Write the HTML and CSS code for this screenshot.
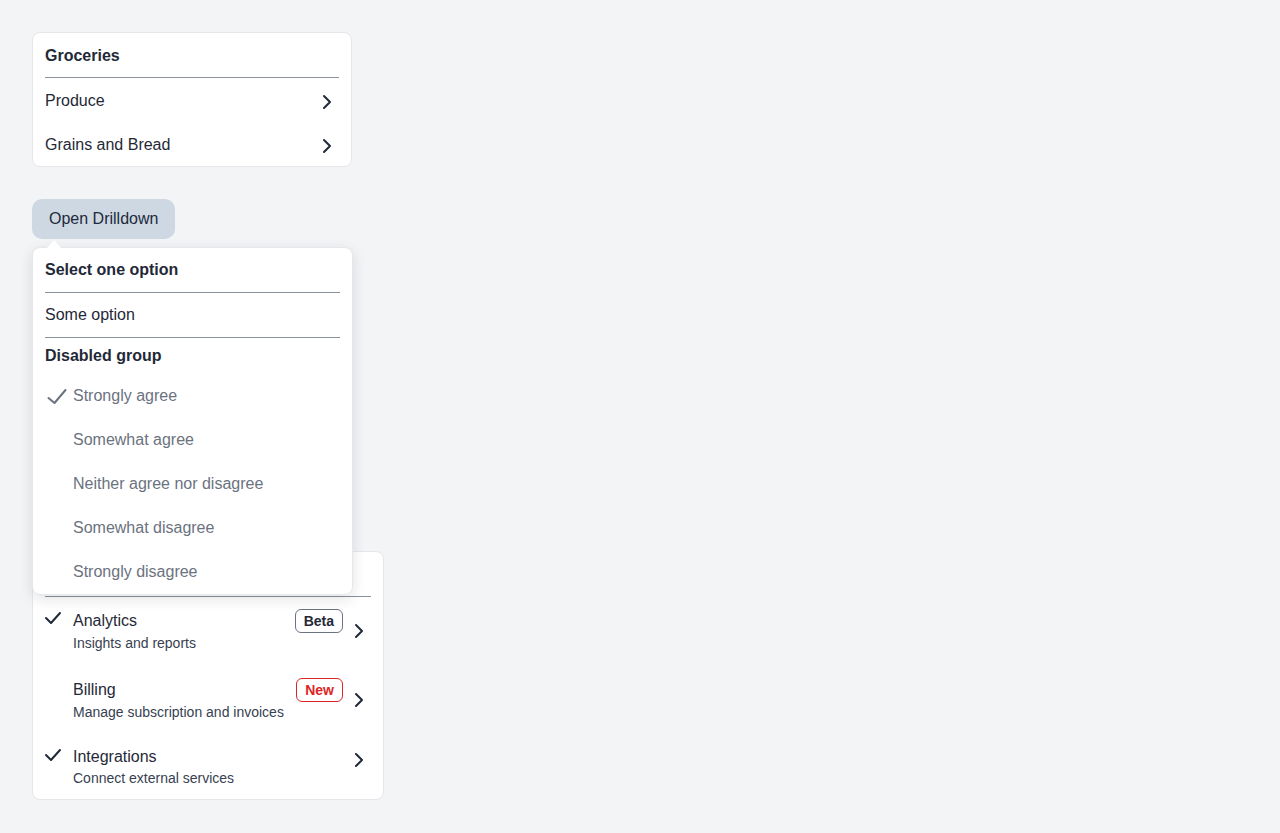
FILE: index.html
```html
<!DOCTYPE html>
<html lang="en">
<head>
<meta charset="utf-8">
<title>Drilldown menus</title>
<link rel="stylesheet" href="styles.css">
</head>
<body>
<main class="stack">

  <!-- Static drilldown list -->
  <section class="card card-narrow">
    <div class="card-head">Groceries</div>
    <div class="divider"></div>
    <div class="row">
      <span>Produce</span>
      <svg class="chev" width="24" height="24" viewBox="0 0 24 24"><polyline points="9 6 15 12 9 18"/></svg>
    </div>
    <div class="row">
      <span>Grains and Bread</span>
      <svg class="chev" width="24" height="24" viewBox="0 0 24 24"><polyline points="9 6 15 12 9 18"/></svg>
    </div>
  </section>

  <!-- Trigger with its open popover -->
  <section class="drill">
    <button class="trigger" type="button">Open Drilldown</button>
    <div class="popover">
      <div class="card-head">Select one option</div>
      <div class="divider"></div>
      <div class="row">Some option</div>
      <div class="divider"></div>
      <div class="group-label">Disabled group</div>
      <div class="row opt disabled">
        <svg class="tick-lg" width="20" height="20" viewBox="0 0 20 20"><polyline points="1.5 12 7.5 17 18.5 4"/></svg>
        <span>Strongly agree</span>
      </div>
      <div class="row opt disabled"><span class="slot"></span><span>Somewhat agree</span></div>
      <div class="row opt disabled"><span class="slot"></span><span>Neither agree nor disagree</span></div>
      <div class="row opt disabled"><span class="slot"></span><span>Somewhat disagree</span></div>
      <div class="row opt disabled"><span class="slot"></span><span>Strongly disagree</span></div>
    </div>
  </section>

  <!-- Rich list with descriptions and badges; its header sits under the popover -->
  <section class="card card-wide">
    <div class="card-head"></div>
    <div class="divider"></div>

    <div class="rich rich-first">
      <span class="lead"><svg width="16" height="16" viewBox="0 0 16 16"><polyline points="1 7 6 12 15 2"/></svg></span>
      <div class="rich-body">
        <div class="rich-top"><span class="title">Analytics</span><span class="badge">Beta</span></div>
        <div class="desc">Insights and reports</div>
      </div>
      <svg class="chev" width="24" height="24" viewBox="0 0 24 24"><polyline points="9 6 15 12 9 18"/></svg>
    </div>

    <div class="rich">
      <span class="lead"></span>
      <div class="rich-body">
        <div class="rich-top"><span class="title">Billing</span><span class="badge badge-new">New</span></div>
        <div class="desc">Manage subscription and invoices</div>
      </div>
      <svg class="chev" width="24" height="24" viewBox="0 0 24 24"><polyline points="9 6 15 12 9 18"/></svg>
    </div>

    <div class="rich rich-plain">
      <span class="lead"><svg width="16" height="16" viewBox="0 0 16 16"><polyline points="1 7 6 12 15 2"/></svg></span>
      <div class="rich-body">
        <div class="rich-top"><span class="title">Integrations</span></div>
        <div class="desc">Connect external services</div>
      </div>
      <svg class="chev" width="24" height="24" viewBox="0 0 24 24"><polyline points="9 6 15 12 9 18"/></svg>
    </div>
  </section>

</main>
</body>
</html>
```

FILE: styles.css
```css
* {
  box-sizing: border-box;
}

html,
body {
  margin: 0;
  background: #f3f4f6;
}

body {
  padding: 32px;
  font-family: "Liberation Sans", Arial, sans-serif;
  font-size: 16px;
  color: #1f2937;
}

.stack {
  display: flex;
  flex-direction: column;
  align-items: flex-start;
  gap: 32px;
}

/* Cards */
.card {
  background: #ffffff;
  border: 1px solid #e5e7eb;
  border-radius: 8px;
  padding: 0 12px;
}

.card-narrow {
  width: 320px;
}

.card-narrow .card-head,
.card-narrow .row {
  padding-top: 2px;
}

.card-narrow .chev {
  margin-top: 2px;
}

.card-wide {
  width: 352px;
}

.card-head {
  height: 44px;
  display: flex;
  align-items: center;
  font-weight: 700;
  color: #1f2937;
}

.divider {
  height: 1px;
  background: #8c929b;
}

.row {
  height: 44px;
  display: flex;
  align-items: center;
  justify-content: space-between;
}

.chev {
  flex: none;
  fill: none;
  stroke: #1f2937;
  stroke-width: 2;
  stroke-linecap: round;
  stroke-linejoin: round;
}

/* Drilldown trigger and popover */
.drill {
  position: relative;
  height: 320px;
}

.trigger {
  height: 40px;
  padding: 0 17px;
  border: none;
  border-radius: 10px;
  background: #cdd8e3;
  color: #1e293b;
  font-family: inherit;
  font-size: 16px;
}

.popover {
  position: absolute;
  top: 48px;
  left: 0;
  z-index: 2;
  width: 321px;
  padding: 0 12px;
  background: #ffffff;
  border: 1px solid #e5e7eb;
  border-radius: 8px;
  box-shadow: 0 4px 14px rgba(15, 23, 42, 0.12);
}

.popover::before {
  content: "";
  position: absolute;
  top: -8px;
  left: 14px;
  border-left: 7px solid transparent;
  border-right: 7px solid transparent;
  border-bottom: 8px solid #ffffff;
}

.group-label {
  height: 36px;
  display: flex;
  align-items: center;
  font-weight: 700;
}

.opt {
  justify-content: flex-start;
  gap: 8px;
}

.disabled {
  color: #6b7280;
}

.slot {
  width: 20px;
  flex: none;
}

.tick-lg {
  flex: none;
  margin-left: 2px;
  margin-right: -2px;
  fill: none;
  stroke: #6b7280;
  stroke-width: 2;
  stroke-linecap: round;
  stroke-linejoin: round;
}

/* Rich rows */
.rich {
  display: flex;
  align-items: center;
  padding: 12px 0;
}

.rich-first {
  padding-bottom: 13px;
}

.lead {
  flex: none;
  align-self: flex-start;
  width: 16px;
  height: 16px;
  margin-top: 2px;
  margin-right: 12px;
}

.lead svg {
  display: block;
  overflow: visible;
  fill: none;
  stroke: #1f2937;
  stroke-width: 2;
  stroke-linecap: round;
  stroke-linejoin: round;
}

.rich-body {
  flex: 1;
  min-width: 0;
  margin-right: 4px;
}

.rich-top {
  display: flex;
  align-items: center;
  justify-content: space-between;
  min-height: 22px;
}

.title {
  line-height: 22px;
}

.desc {
  font-size: 14px;
  line-height: 20px;
  color: #374151;
}

/* Rows without a badge keep the chevron beside the title */
.rich-plain {
  padding-bottom: 11px;
}

.rich-plain .chev {
  align-self: flex-start;
  margin-top: 2px;
}

.badge {
  height: 24px;
  display: inline-flex;
  align-items: center;
  padding: 0 8px;
  border: 1px solid #6b7280;
  border-radius: 6px;
  font-size: 14px;
  font-weight: 700;
  color: #1f2937;
}

.badge-new {
  border-color: #dc2626;
  color: #dc2626;
}
```
